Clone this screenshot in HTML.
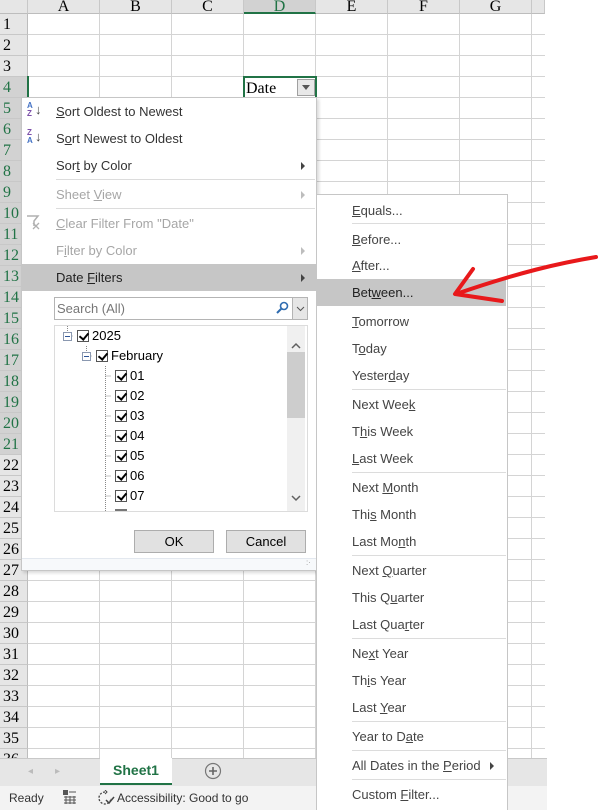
<!DOCTYPE html>
<html><head><meta charset="utf-8"><style>
*{margin:0;padding:0;box-sizing:border-box}
body{width:600px;height:810px;position:relative;overflow:hidden;background:#fff;font-family:"Liberation Sans",sans-serif}
.abs{position:absolute}
.rh{position:absolute;left:0;width:28px;height:21px;background:#e6e6e6;border-bottom:1px solid #c8c8c8;border-right:1px solid #bdbdbd;font-family:"Liberation Serif",serif;font-size:16px;line-height:21px;color:#000;padding-left:3px}
.rh.s{background:#d2d2d2;color:#217346}
.ch{position:absolute;top:0;height:14px;background:#e6e6e6;border-right:1px solid #c8c8c8;border-bottom:1px solid #bdbdbd;font-family:"Liberation Serif",serif;font-size:16px;line-height:13px;text-align:center;overflow:hidden}
.mi{position:absolute;left:56px;font-size:13px;color:#333;line-height:16px}
.g{color:#a6a6a6}
.sep{position:absolute;height:1px;background:#dcdcdc}
.tri{position:absolute;width:0;height:0;border-top:4px solid transparent;border-bottom:4px solid transparent;border-left:4px solid #444}
.tri.g2{border-left-color:#bdbdbd}
.si{position:absolute;left:352px;font-size:13px;color:#444;line-height:16px}
.cb{position:absolute;width:12px;height:12px;border:1px solid #555;background:#fff}
.cb:after{content:"";position:absolute;left:3px;top:0px;width:4px;height:7px;border-right:2px solid #000;border-bottom:2px solid #000;transform:rotate(40deg)}
.lt{position:absolute;font-size:13px;color:#000;line-height:16px}
.btn{position:absolute;height:23px;background:#e1e1e1;border:1px solid #adadad;font-size:13px;text-align:center;line-height:21px;color:#000}
</style></head><body>
<!-- grid -->
<div class="abs" style="left:28px;top:14px;width:517px;height:744px;background:
repeating-linear-gradient(to bottom,transparent 0,transparent 20px,#d4d4d4 20px,#d4d4d4 21px),
repeating-linear-gradient(to right,transparent 0,transparent 71px,#d4d4d4 71px,#d4d4d4 72px)"></div>
<!-- col headers -->
<div class="ch" style="left:0;width:28px"></div>
<div class="ch" style="left:28px;width:72px">A</div>
<div class="ch" style="left:100px;width:72px">B</div>
<div class="ch" style="left:172px;width:72px">C</div>
<div class="ch" style="left:244px;width:72px;background:#d2d2d2;color:#217346;border-bottom:2px solid #217346">D</div>
<div class="ch" style="left:316px;width:72px">E</div>
<div class="ch" style="left:388px;width:72px">F</div>
<div class="ch" style="left:460px;width:72px">G</div>
<div class="ch" style="left:532px;width:13px"></div>
<!-- row headers -->
<div class="rh" style="top:14px">1</div>
<div class="rh" style="top:35px">2</div>
<div class="rh" style="top:56px">3</div>
<div class="rh s" style="top:77px">4</div>
<div class="rh s" style="top:98px">5</div>
<div class="rh s" style="top:119px">6</div>
<div class="rh s" style="top:140px">7</div>
<div class="rh s" style="top:161px">8</div>
<div class="rh s" style="top:182px">9</div>
<div class="rh s" style="top:203px">10</div>
<div class="rh s" style="top:224px">11</div>
<div class="rh s" style="top:245px">12</div>
<div class="rh s" style="top:266px">13</div>
<div class="rh s" style="top:287px">14</div>
<div class="rh s" style="top:308px">15</div>
<div class="rh s" style="top:329px">16</div>
<div class="rh s" style="top:350px">17</div>
<div class="rh s" style="top:371px">18</div>
<div class="rh s" style="top:392px">19</div>
<div class="rh s" style="top:413px">20</div>
<div class="rh s" style="top:434px">21</div>
<div class="rh" style="top:455px">22</div>
<div class="rh" style="top:476px">23</div>
<div class="rh" style="top:497px">24</div>
<div class="rh" style="top:518px">25</div>
<div class="rh" style="top:539px">26</div>
<div class="rh" style="top:560px">27</div>
<div class="rh" style="top:581px">28</div>
<div class="rh" style="top:602px">29</div>
<div class="rh" style="top:623px">30</div>
<div class="rh" style="top:644px">31</div>
<div class="rh" style="top:665px">32</div>
<div class="rh" style="top:686px">33</div>
<div class="rh" style="top:707px">34</div>
<div class="rh" style="top:728px">35</div>
<div class="rh" style="top:749px">36</div>
<!-- selection -->
<div class="abs" style="left:27px;top:76px;width:2px;height:22px;background:#217346"></div>
<div class="abs" style="left:243px;top:76px;width:74px;height:380px;border:2px solid #217346"></div>
<div class="abs" style="left:246px;top:79px;font-family:'Liberation Serif',serif;font-size:16px;line-height:20px">Date</div>
<div class="abs" style="left:297px;top:79px;width:18px;height:17px;background:#e8e8e8;border:1px solid #a0a0a0"><div class="abs" style="left:4px;top:5px;border-left:4px solid transparent;border-right:4px solid transparent;border-top:5px solid #555"></div></div>

<!-- main menu -->
<div class="abs" style="left:21px;top:97px;width:296px;height:474px;background:#fff;border:1px solid #c6c6c6;box-shadow:2px 2px 3px rgba(0,0,0,.15)"></div>
<div class="abs" style="left:27px;top:102px;font-size:8px;line-height:8px;color:#4472c4;font-weight:bold">A<br><span style="color:#7b4fa8">Z</span></div>
<div class="abs" style="left:35px;top:102px;font-size:13px;color:#444">↓</div>
<div class="abs" style="left:27px;top:129px;font-size:8px;line-height:8px;color:#7b4fa8;font-weight:bold">Z<br><span style="color:#4472c4">A</span></div>
<div class="abs" style="left:35px;top:129px;font-size:13px;color:#444">↓</div>
<div class="mi" style="top:104px"><u>S</u>ort Oldest to Newest</div>
<div class="mi" style="top:131px">S<u>o</u>rt Newest to Oldest</div>
<div class="mi" style="top:158px">Sor<u>t</u> by Color</div>
<div class="tri" style="left:301px;top:162px"></div>
<div class="sep" style="left:56px;top:179px;width:259px"></div>
<div class="mi g" style="top:187px">Sheet <u>V</u>iew</div>
<div class="tri g2" style="left:301px;top:191px"></div>
<div class="sep" style="left:56px;top:208px;width:259px"></div>
<svg class="abs" style="left:26px;top:215px" width="16" height="16"><path d="M1 1h11l-4 5v5" fill="none" stroke="#b0b0b0" stroke-width="1.5"/><path d="M7 8l6 6M13 8l-6 6" stroke="#b0b0b0" stroke-width="1.3"/></svg>
<div class="mi g" style="top:216px"><u>C</u>lear Filter From "Date"</div>
<div class="mi g" style="top:243px">F<u>i</u>lter by Color</div>
<div class="tri g2" style="left:301px;top:247px"></div>
<div class="abs" style="left:22px;top:264px;width:294px;height:27px;background:#c6c6c6"></div>
<div class="mi" style="top:270px;color:#222">Date <u>F</u>ilters</div>
<div class="tri" style="left:301px;top:274px"></div>
<!-- search -->
<div class="abs" style="left:54px;top:297px;width:254px;height:23px;border:1px solid #b4b4b4;background:#fff"></div>
<div class="abs" style="left:57px;top:301px;font-size:13px;color:#777">Search (All)</div>
<svg class="abs" style="left:275px;top:301px" width="14" height="14"><circle cx="9" cy="5" r="3.5" fill="none" stroke="#2f6cb0" stroke-width="1.6"/><path d="M6.5 7.5L2 12" stroke="#2f6cb0" stroke-width="2"/></svg>
<div class="abs" style="left:292px;top:298px;width:15px;height:21px;background:#e6e6e6;border-left:1px solid #b4b4b4"><svg width="15" height="21"><path d="M4 9l3.5 3.5L11 9" fill="none" stroke="#555"/></svg></div>
<!-- list -->
<div class="abs" style="left:54px;top:325px;width:254px;height:187px;border:1px solid #dcdcdc;background:#fff"></div>
<div class="abs" style="left:287px;top:326px;width:18px;height:185px;background:#f0f0f0"></div>
<div class="abs" style="left:287px;top:352px;width:18px;height:66px;background:#cdcdcd"></div>
<svg class="abs" style="left:287px;top:326px" width="18" height="185"><path d="M5 22l4-4 4 4M5 170l4 4 4-4" fill="none" stroke="#606060" stroke-width="1.5"/></svg>
<svg class="abs" style="left:55px;top:326px" width="60" height="185"><g stroke="#888" stroke-dasharray="1 1" fill="none"><path d="M12.5 0v5M12.5 10h5M31.5 20v5M31.5 30h5M50.5 40v145M50.5 50h5M50.5 70h5M50.5 90h5M50.5 110h5M50.5 130h5M50.5 150h5M50.5 170h5"/></g>
<rect x="8.5" y="6.5" width="8" height="8" fill="#fff" stroke="#8a98b0"/><path d="M10 10.5h5" stroke="#2f5597"/>
<rect x="27.5" y="26.5" width="8" height="8" fill="#fff" stroke="#8a98b0"/><path d="M29 30.5h5" stroke="#2f5597"/></svg>
<div class="cb" style="left:77px;top:330px"></div><div class="lt" style="left:92px;top:328px">2025</div>
<div class="cb" style="left:96px;top:350px"></div><div class="lt" style="left:111px;top:348px">February</div>
<div class="cb" style="left:115px;top:370px"></div><div class="lt" style="left:130px;top:368px">01</div>
<div class="cb" style="left:115px;top:390px"></div><div class="lt" style="left:130px;top:388px">02</div>
<div class="cb" style="left:115px;top:410px"></div><div class="lt" style="left:130px;top:408px">03</div>
<div class="cb" style="left:115px;top:430px"></div><div class="lt" style="left:130px;top:428px">04</div>
<div class="cb" style="left:115px;top:450px"></div><div class="lt" style="left:130px;top:448px">05</div>
<div class="cb" style="left:115px;top:470px"></div><div class="lt" style="left:130px;top:468px">06</div>
<div class="cb" style="left:115px;top:490px"></div><div class="lt" style="left:130px;top:488px">07</div>
<div class="abs" style="left:115px;top:509px;width:12px;height:2px;background:#777"></div>
<div class="btn" style="left:134px;top:530px;width:80px">OK</div>
<div class="btn" style="left:226px;top:530px;width:80px">Cancel</div>
<div class="abs" style="left:22px;top:558px;width:294px;height:12px;background:#f7f9fb;border-top:1px solid #e3e8ef"></div>
<div class="abs" style="left:306px;top:560px;font-size:8px;color:#999;line-height:5px">:·</div>

<!-- tab bar -->
<div class="abs" style="left:0;top:758px;width:547px;height:28px;background:#e6e6e6;border-top:1px solid #c8c8c8"></div>
<div class="abs" style="left:28px;top:766px;font-size:10px;color:#bbb">◂</div>
<div class="abs" style="left:55px;top:766px;font-size:10px;color:#bbb">▸</div>
<div class="abs" style="left:100px;top:758px;width:72px;height:27px;background:#fff;border-bottom:2px solid #217346;font-size:14px;font-weight:bold;color:#217346;text-align:center;line-height:25px">Sheet1</div>
<svg class="abs" style="left:204px;top:762px" width="18" height="18"><circle cx="9" cy="9" r="7.5" fill="none" stroke="#777" stroke-width="1.2"/><path d="M9 5v8M5 9h8" stroke="#666" stroke-width="1.6"/></svg>
<!-- status -->
<div class="abs" style="left:0;top:786px;width:547px;height:24px;background:#f3f3f3"></div>
<div class="abs" style="left:9px;top:791px;font-size:12px;color:#333">Ready</div>
<svg class="abs" style="left:63px;top:790px" width="14" height="14"><rect x="0" y="0" width="5" height="5" fill="#555"/><path d="M6 2h7M1 7h12M1 10h12M1 13h12M3 6v8M7 6v8M11 6v8" stroke="#555"/></svg>
<svg class="abs" style="left:97px;top:790px" width="18" height="16"><path d="M8 2a6 6 0 1 0 6 6" fill="none" stroke="#444" stroke-dasharray="2 1.5" stroke-width="1.3"/><path d="M9 10l3 3 5-6" fill="none" stroke="#444" stroke-width="1.5"/><path d="M8 0l2 2-2 2" fill="none" stroke="#444"/></svg>
<div class="abs" style="left:117px;top:791px;font-size:12px;color:#333">Accessibility: Good to go</div>

<!-- submenu -->
<div class="abs" style="left:316px;top:194px;width:192px;height:616px;background:#fff;border:1px solid #c6c6c6;border-bottom:none"></div>
<div class="si" style="top:203px"><u>E</u>quals...</div>
<div class="sep" style="left:352px;top:223px;width:154px"></div>
<div class="si" style="top:232px"><u>B</u>efore...</div>
<div class="si" style="top:258px"><u>A</u>fter...</div>
<div class="abs" style="left:317px;top:279px;width:189px;height:27px;background:#c6c6c6"></div>
<div class="si" style="top:285px;color:#222">Bet<u>w</u>een...</div>
<div class="si" style="top:314px"><u>T</u>omorrow</div>
<div class="si" style="top:341px">T<u>o</u>day</div>
<div class="si" style="top:368px">Yester<u>d</u>ay</div>
<div class="sep" style="left:352px;top:389px;width:154px"></div>
<div class="si" style="top:397px">Next Wee<u>k</u></div>
<div class="si" style="top:424px">T<u>h</u>is Week</div>
<div class="si" style="top:451px"><u>L</u>ast Week</div>
<div class="sep" style="left:352px;top:472px;width:154px"></div>
<div class="si" style="top:480px">Next <u>M</u>onth</div>
<div class="si" style="top:507px">Thi<u>s</u> Month</div>
<div class="si" style="top:534px">Last Mo<u>n</u>th</div>
<div class="sep" style="left:352px;top:555px;width:154px"></div>
<div class="si" style="top:563px">Next <u>Q</u>uarter</div>
<div class="si" style="top:590px">This Q<u>u</u>arter</div>
<div class="si" style="top:617px">Last Qua<u>r</u>ter</div>
<div class="sep" style="left:352px;top:638px;width:154px"></div>
<div class="si" style="top:646px">Ne<u>x</u>t Year</div>
<div class="si" style="top:673px">Th<u>i</u>s Year</div>
<div class="si" style="top:700px">Last <u>Y</u>ear</div>
<div class="sep" style="left:352px;top:721px;width:154px"></div>
<div class="si" style="top:729px">Year to D<u>a</u>te</div>
<div class="sep" style="left:352px;top:750px;width:154px"></div>
<div class="si" style="top:758px">All Dates in the <u>P</u>eriod</div>
<div class="tri" style="left:490px;top:762px"></div>
<div class="sep" style="left:352px;top:779px;width:154px"></div>
<div class="si" style="top:787px">Custom <u>F</u>ilter...</div>

<!-- red arrow -->
<svg class="abs" style="left:0;top:0" width="600" height="810"><g fill="none" stroke="#e8191b" stroke-width="4" stroke-linecap="round" stroke-linejoin="round"><path d="M596 257C560 263 520 272 456 294"/><path d="M473 269L455 294L502 301"/></g></svg>
</body></html>
